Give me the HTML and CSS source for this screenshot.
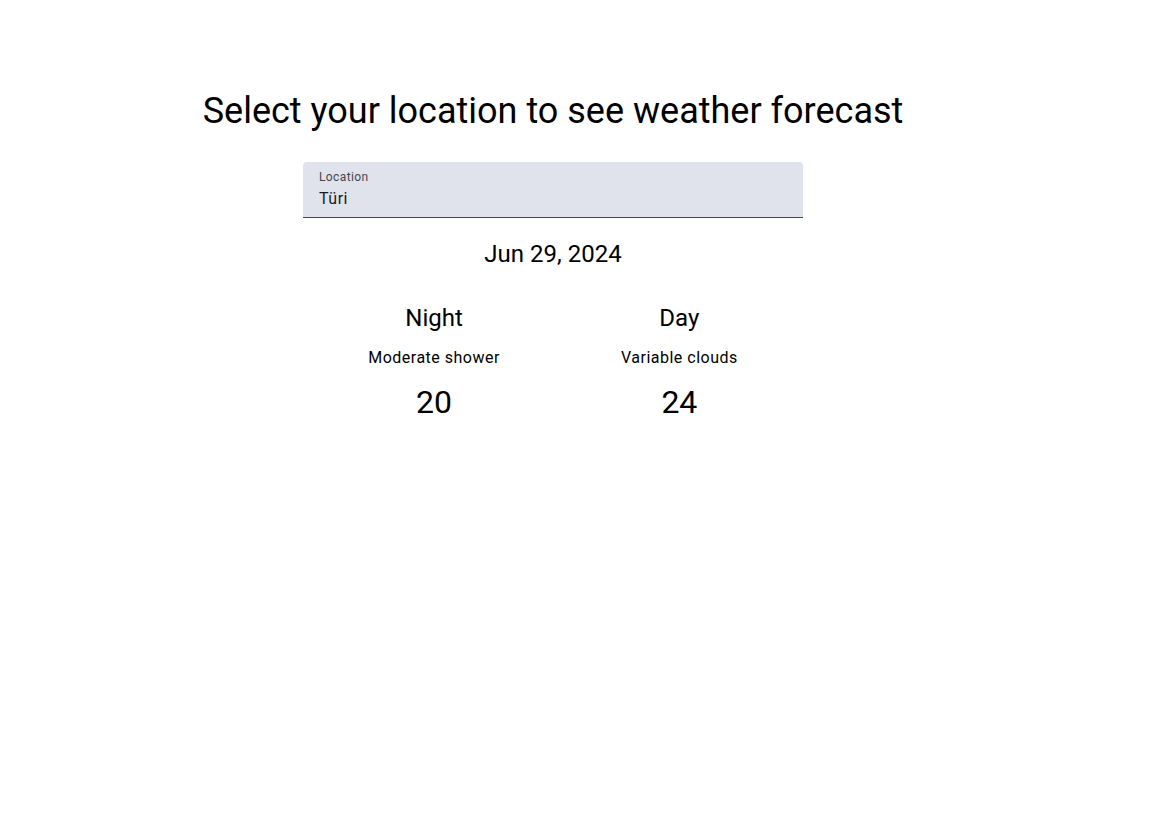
FILE: index.html
```html
<!DOCTYPE html>
<html>
<head>
<meta charset="utf-8">
<link rel="stylesheet" href="styles.css">
</head>
<body>
<main class="page">
  <h1 class="title">Select your location to see weather forecast</h1>
  <div class="field">
    <span class="field-label">Location</span>
    <span class="field-value">Türi</span>
  </div>
  <div class="date">Jun 29, 2024</div>
  <div class="forecast">
    <div class="period">
      <div class="period-name">Night</div>
      <div class="period-desc">Moderate shower</div>
      <div class="period-temp">20</div>
    </div>
    <div class="period">
      <div class="period-name">Day</div>
      <div class="period-desc">Variable clouds</div>
      <div class="period-temp">24</div>
    </div>
  </div>
</main>
</body>
</html>
```
FILE: styles.css
```css
html, body {
  margin: 0;
  padding: 0;
  background: #ffffff;
  font-family: Roboto, "Liberation Sans", sans-serif;
  color: #000;
}
.page {
  width: 700px;
  margin-left: 203px;
  padding-top: 89px;
  display: flex;
  flex-direction: column;
  align-items: center;
}
.title {
  margin: 0;
  font-size: 36px;
  font-weight: 400;
  line-height: 44px;
  white-space: nowrap;
}
.field {
  margin-top: 29px;
  width: 500px;
  height: 56px;
  box-sizing: border-box;
  background: #e0e2ec;
  border-radius: 4px 4px 0 0;
  border-bottom: 1px solid #44474e;
  padding: 7px 16px 0;
  display: flex;
  flex-direction: column;
}
.field-label {
  font-size: 12px;
  line-height: 16px;
  color: #44474e;
  letter-spacing: 0.4px;
}
.field-value {
  margin-top: 2px;
  font-size: 16px;
  line-height: 24px;
  color: #1a1b20;
  letter-spacing: 0.5px;
}
.date {
  margin-top: 20px;
  font-size: 24px;
  line-height: 32px;
}
.forecast {
  margin-top: 32px;
  display: flex;
  gap: 121px;
}
.period {
  display: flex;
  flex-direction: column;
  align-items: center;
}
.period-name {
  font-size: 24px;
  line-height: 32px;
}
.period-desc {
  margin-top: 12px;
  font-size: 16px;
  line-height: 24px;
  letter-spacing: 0.5px;
}
.period-temp {
  margin-top: 12px;
  font-size: 32px;
  line-height: 40px;
}
```
